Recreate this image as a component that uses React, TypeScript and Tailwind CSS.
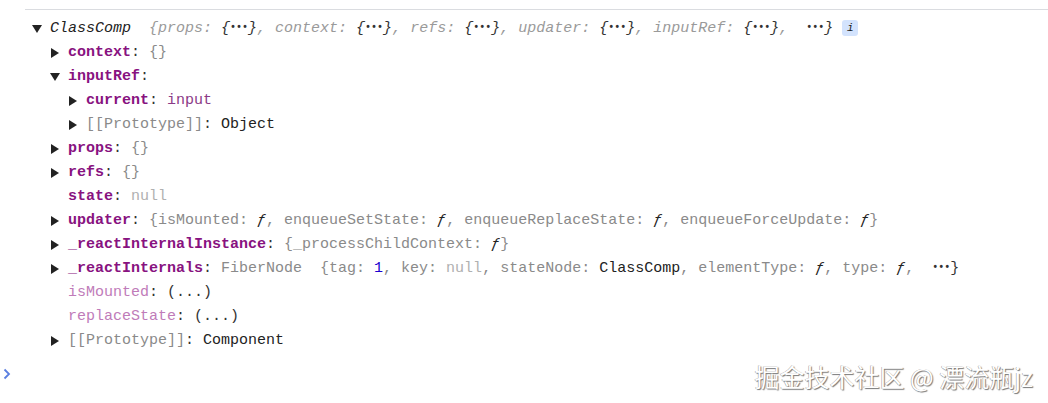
import React from 'react';

const Arrow: React.FC<{ open?: boolean }> = ({ open }) => (
  <span className="inline-flex w-[18px] shrink-0 items-center">
    <svg width="10" height="10" viewBox="0 0 10 10" className="text-[#222]">
      {open ? <polygon points="0,1 10,1 5,9" fill="currentColor" /> : <polygon points="1,0 9,5 1,10" fill="currentColor" />}
    </svg>
  </span>
);

const Key: React.FC<{ children: React.ReactNode; dim?: boolean }> = ({ children, dim }) =>
  dim ? <span className="text-[#c07bb9]">{children}</span> : <span className="font-bold text-[#881280]">{children}</span>;

const Colon = () => <span className="text-[#333]">: </span>;
const Fn = () => <span className="italic text-[#222]">ƒ</span>;
const Gray: React.FC<{ children: React.ReactNode }> = ({ children }) => <span className="text-[#8a8a8a]">{children}</span>;

// devtools draws the ellipsis double-width
const Ell = () => (
  <span className="inline-block w-[18px] translate-y-[3px] overflow-hidden text-center text-[10px] font-bold not-italic text-[#333]">•••</span>
);

const Row: React.FC<{ level: number; arrow?: 'open' | 'closed'; children: React.ReactNode }> = ({ level, arrow, children }) => {
  const pad = ['pl-[32px]', 'pl-[50px]', 'pl-[68px]'][level];
  return (
    <div className={`flex h-[24px] items-center whitespace-pre ${pad}`}>
      {arrow ? <Arrow open={arrow === 'open'} /> : <span className="w-[18px] shrink-0" />}
      <span>{children}</span>
    </div>
  );
};

const Dots = () => <span className="text-[#333]">{'{'}<Ell />{'}'}</span>;

export default function App() {
  return (
    <div className="relative h-[403px] w-[1048px] overflow-hidden bg-white pt-[9px] text-[15px] text-[#222] [font-family:'Liberation_Mono','Noto_Sans_CJK_SC',monospace]">
      <div className="ml-[25px] border-t border-[#dadce0] pt-[7px]">
        <div className="-ml-[25px]">
          <Row level={0} arrow="open">
            <span className="italic text-[#222]">ClassComp</span>
            <span className="italic text-[#9a9a9a]">
              {'  {props: '}<Dots />, context: <Dots />, refs: <Dots />, updater: <Dots />, inputRef: <Dots />,{'  '}
              <span className="text-[#333]"><Ell />{'}'}</span>
            </span>
            <span className="ml-[9px] inline-flex h-[16px] w-[16px] items-center justify-center rounded-[3px] bg-[#d3e3fd] align-middle text-[11px] italic text-[#1a1a1a]">i</span>
          </Row>
          <Row level={1} arrow="closed"><Key>context</Key><Colon /><Gray>{'{}'}</Gray></Row>
          <Row level={1} arrow="open"><Key>inputRef</Key><span className="text-[#333]">:</span></Row>
          <Row level={2} arrow="closed"><Key>current</Key><Colon /><span className="text-[#8b3a86]">input</span></Row>
          <Row level={2} arrow="closed"><Gray>[[Prototype]]</Gray><Colon /><span className="text-[#222]">Object</span></Row>
          <Row level={1} arrow="closed"><Key>props</Key><Colon /><Gray>{'{}'}</Gray></Row>
          <Row level={1} arrow="closed"><Key>refs</Key><Colon /><Gray>{'{}'}</Gray></Row>
          <Row level={1}><Key>state</Key><Colon /><span className="text-[#b0b0b0]">null</span></Row>
          <Row level={1} arrow="closed">
            <Key>updater</Key><Colon />
            <Gray>{'{isMounted: '}</Gray><Fn /><Gray>{', enqueueSetState: '}</Gray><Fn /><Gray>{', enqueueReplaceState: '}</Gray><Fn /><Gray>{', enqueueForceUpdate: '}</Gray><Fn /><Gray>{'}'}</Gray>
          </Row>
          <Row level={1} arrow="closed">
            <Key>_reactInternalInstance</Key><Colon /><Gray>{'{_processChildContext: '}</Gray><Fn /><Gray>{'}'}</Gray>
          </Row>
          <Row level={1} arrow="closed">
            <Key>_reactInternals</Key><Colon /><Gray>FiberNode</Gray>
            <Gray>{'  {tag: '}</Gray><span className="text-[#1c00cf]">1</span><Gray>{', key: '}</Gray><span className="text-[#b0b0b0]">null</span>
            <Gray>{', stateNode: '}</Gray><span className="text-[#222]">ClassComp</span><Gray>{', elementType: '}</Gray><Fn /><Gray>{', type: '}</Gray><Fn /><Gray>{',  '}</Gray><span className="text-[#333]"><Ell />{'}'}</span>
          </Row>
          <Row level={1}><Key dim>isMounted</Key><Colon /><span className="text-[#333]">(...)</span></Row>
          <Row level={1}><Key dim>replaceState</Key><Colon /><span className="text-[#333]">(...)</span></Row>
          <Row level={1} arrow="closed"><Gray>[[Prototype]]</Gray><Colon /><span className="text-[#222]">Component</span></Row>
        </div>
      </div>
      <div className="mt-[9px] flex h-[24px] items-center pl-[3px]">
        <svg width="8" height="12" viewBox="0 0 8 12">
          <polyline points="1.5,1.5 6,6 1.5,10.5" fill="none" stroke="#5b7fe0" strokeWidth="1.8" />
        </svg>
      </div>
      <div className="absolute bottom-[14px] right-[15px] text-[25px] leading-none text-white [font-family:'Noto_Sans_CJK_SC',sans-serif] [text-shadow:1px_1px_1px_#777,-0.5px_-0.5px_0.5px_#999]">
        掘金技术社区 @ 漂流瓶jz
      </div>
    </div>
  );
}
